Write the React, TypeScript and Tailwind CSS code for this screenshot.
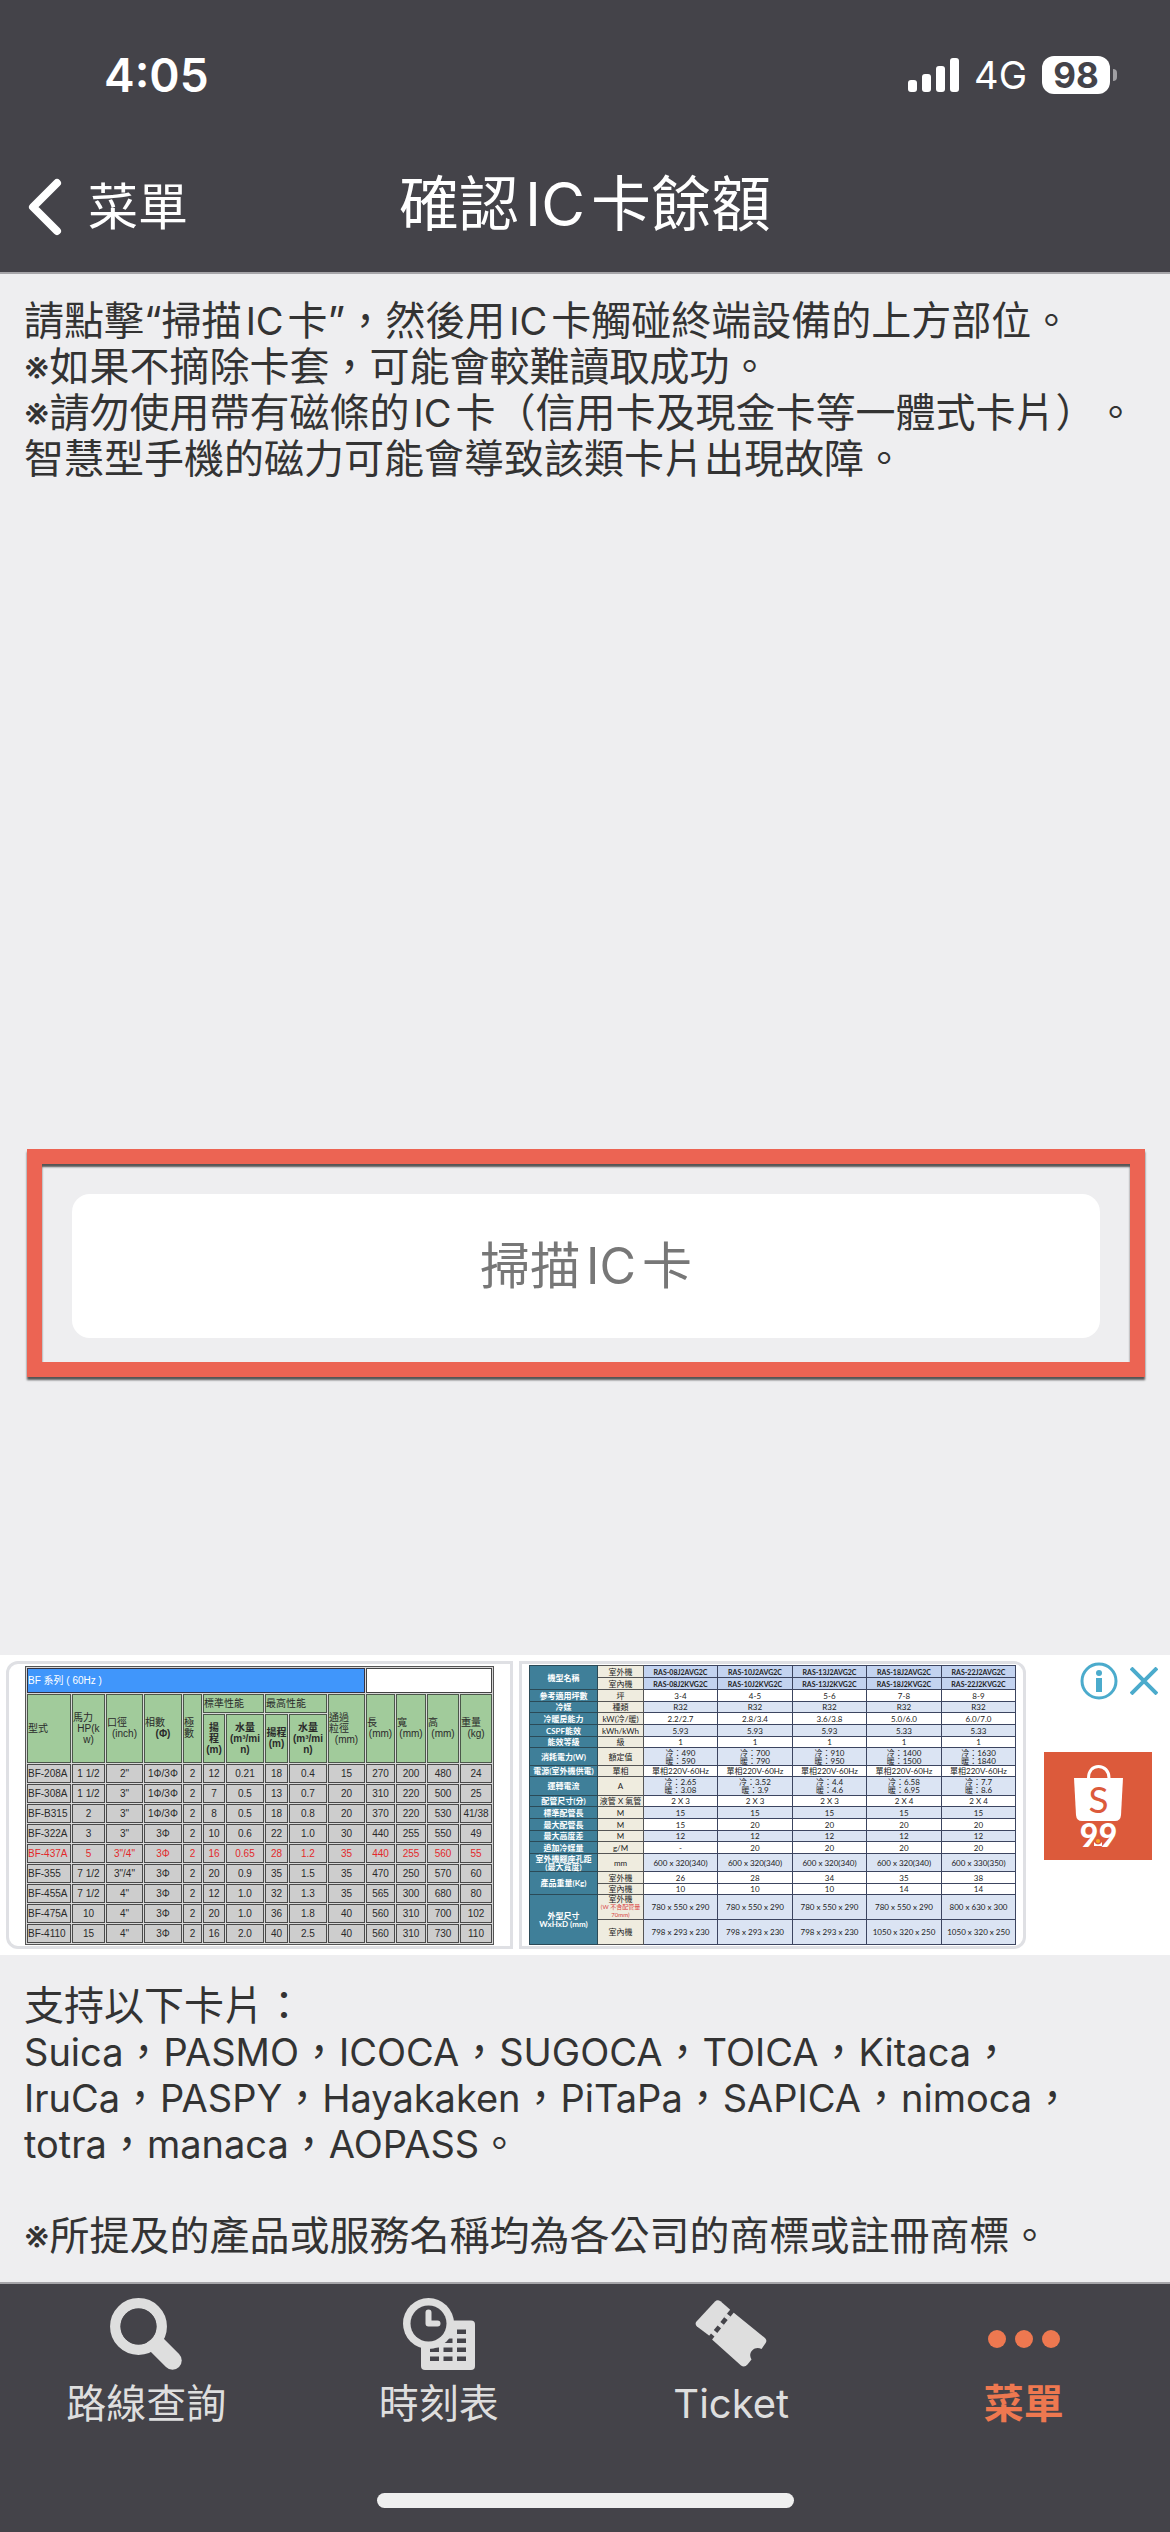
import { Fragment, type ReactNode } from 'react'
import clsx from 'clsx'

const PUMP_COLS = [45, 34, 38, 39, 20, 23, 39, 24, 39, 38, 30, 31, 33, 33]

const PUMP_ROWS = [
  ['BF-208A', '1 1/2', '2"', '1Φ/3Φ', '2', '12', '0.21', '18', '0.4', '15', '270', '200', '480', '24'],
  ['BF-308A', '1 1/2', '3"', '1Φ/3Φ', '2', '7', '0.5', '13', '0.7', '20', '310', '220', '500', '25'],
  ['BF-B315', '2', '3"', '1Φ/3Φ', '2', '8', '0.5', '18', '0.8', '20', '370', '220', '530', '41/38'],
  ['BF-322A', '3', '3"', '3Φ', '2', '10', '0.6', '22', '1.0', '30', '440', '255', '550', '49'],
  ['BF-437A', '5', '3"/4"', '3Φ', '2', '16', '0.65', '28', '1.2', '35', '440', '255', '560', '55'],
  ['BF-355', '7 1/2', '3"/4"', '3Φ', '2', '20', '0.9', '35', '1.5', '35', '470', '250', '570', '60'],
  ['BF-455A', '7 1/2', '4"', '3Φ', '2', '12', '1.0', '32', '1.3', '35', '565', '300', '680', '80'],
  ['BF-475A', '10', '4"', '3Φ', '2', '20', '1.0', '36', '1.8', '40', '560', '310', '700', '102'],
  ['BF-4110', '15', '4"', '3Φ', '2', '16', '2.0', '40', '2.5', '40', '560', '310', '730', '110'],
]

const AC_COLS = [68, 46, 74, 75, 74, 75, 74]

type AcRow = { h: number; head?: string; span?: number; unit: string; note?: string; cells: string[]; tone?: 'model' | 'blue' }

const AC_ROWS: AcRow[] = [
  { h: 12, head: '機型名稱', span: 2, unit: '室外機', tone: 'model', cells: ['RAS-08J2AVG2C', 'RAS-10J2AVG2C', 'RAS-13J2AVG2C', 'RAS-18J2AVG2C', 'RAS-22J2AVG2C'] },
  { h: 12, unit: '室內機', tone: 'model', cells: ['RAS-08J2KVG2C', 'RAS-10J2KVG2C', 'RAS-13J2KVG2C', 'RAS-18J2KVG2C', 'RAS-22J2KVG2C'] },
  { h: 12, head: '參考適用坪數', unit: '坪', cells: ['3-4', '4-5', '5-6', '7-8', '8-9'] },
  { h: 11, head: '冷媒', unit: '種類', tone: 'blue', cells: ['R32', 'R32', 'R32', 'R32', 'R32'] },
  { h: 12, head: '冷暖房能力', unit: 'kW(冷/暖)', cells: ['2.2/2.7', '2.8/3.4', '3.6/3.8', '5.0/6.0', '6.0/7.0'] },
  { h: 12, head: 'CSPF能效', unit: 'kWh/kWh', tone: 'blue', cells: ['5.93', '5.93', '5.93', '5.33', '5.33'] },
  { h: 11, head: '能效等級', unit: '級', cells: ['1', '1', '1', '1', '1'] },
  { h: 18, head: '消耗電力(W)', unit: '額定值', tone: 'blue', cells: ['冷：490\n暖：590', '冷：700\n暖：790', '冷：910\n暖：950', '冷：1400\n暖：1500', '冷：1630\n暖：1840'] },
  { h: 11, head: '電源(室外機供電)', unit: '單相', cells: ['單相220V-60Hz', '單相220V-60Hz', '單相220V-60Hz', '單相220V-60Hz', '單相220V-60Hz'] },
  { h: 19, head: '運轉電流', unit: 'A', tone: 'blue', cells: ['冷：2.65\n暖：3.08', '冷：3.52\n暖：3.9', '冷：4.4\n暖：4.6', '冷：6.58\n暖：6.95', '冷：7.7\n暖：8.6'] },
  { h: 11, head: '配管尺寸(分)', unit: '液管 X 氣管', cells: ['2 X 3', '2 X 3', '2 X 3', '2 X 4', '2 X 4'] },
  { h: 12, head: '標準配管長', unit: 'M', tone: 'blue', cells: ['15', '15', '15', '15', '15'] },
  { h: 12, head: '最大配管長', unit: 'M', cells: ['15', '20', '20', '20', '20'] },
  { h: 11, head: '最大高度差', unit: 'M', tone: 'blue', cells: ['12', '12', '12', '12', '12'] },
  { h: 12, head: '追加冷媒量', unit: 'g/M', cells: ['-', '20', '20', '20', '20'] },
  { h: 18, head: '室外機腳座孔距\n(最大寬度)', unit: 'mm', tone: 'blue', cells: ['600 x 320(340)', '600 x 320(340)', '600 x 320(340)', '600 x 320(340)', '600 x 330(350)'] },
  { h: 12, head: '產品重量(Kg)', span: 2, unit: '室外機', cells: ['26', '28', '34', '35', '38'] },
  { h: 11, unit: '室內機', cells: ['10', '10', '10', '14', '14'] },
  { h: 25, head: '外型尺寸\nWxHxD (mm)', span: 2, unit: '室外機', note: '(W 不含配管量\n70mm)', tone: 'blue', cells: ['780 x 550 x 290', '780 x 550 x 290', '780 x 550 x 290', '780 x 550 x 290', '800 x 630 x 300'] },
  { h: 25, unit: '室內機', tone: 'blue', cells: ['798 x 293 x 230', '798 x 293 x 230', '798 x 293 x 230', '1050 x 320 x 250', '1050 x 320 x 250'] },
]

const CARD_LINES = [
  ['Suica', 'PASMO', 'ICOCA', 'SUGOCA', 'TOICA', 'Kitaca'],
  ['IruCa', 'PASPY', 'Hayakaken', 'PiTaPa', 'SAPICA', 'nimoca'],
]

function Latin({ children }: { children: ReactNode }) {
  return <span className="text-[38px] leading-none">{children}</span>
}

function StatusBar() {
  return (
    <div className="flex h-[150px] items-center justify-between pl-[104px] pr-[53px] font-[Inter,sans-serif]">
      <span className="text-[46px] leading-none font-semibold">4:05</span>
      <div className="flex items-center gap-[15px]">
        <svg width="51" height="34" viewBox="0 0 51 34" fill="currentColor">
          <rect x="0" y="22" width="9" height="12" rx="3" />
          <rect x="14" y="16" width="9" height="18" rx="3" />
          <rect x="28" y="8" width="9" height="26" rx="3" />
          <rect x="42" y="0" width="9" height="34" rx="3" />
        </svg>
        <span className="text-[38px] leading-none">4G</span>
        <div className="flex items-center gap-[3px]">
          <span className="flex h-[38px] w-[68px] items-center justify-center rounded-xl bg-white text-[35px] leading-none font-bold text-[#444349]">
            98
          </span>
          <span className="h-3 w-1 rounded-r-full bg-[#a09fa3]" />
        </div>
      </div>
    </div>
  )
}

function PumpTable() {
  const th = 'border border-[#4b574a] bg-[#a1cb9b] p-0 font-normal'
  return (
    <table className="w-[466px] table-fixed border-separate border-spacing-px border border-[#555] bg-[#d8d8d8] font-['Liberation_Sans','Noto_Sans_CJK_TC',sans-serif] text-[10px] leading-[11px] whitespace-nowrap text-[#2a2a2a]">
      <colgroup>
        {PUMP_COLS.map((w, i) => <col key={i} style={{ width: w - 1 }} />)}
      </colgroup>
      <thead className="text-left">
        <tr className="h-[25px]">
          <th colSpan={10} className="border border-[#334] bg-[#4096fb] p-0 font-normal text-white">BF 系列 ( 60Hz )</th>
          <td colSpan={4} className="border border-[#444] bg-white p-0" />
        </tr>
        <tr className="h-[19px]">
          <th rowSpan={2} className={th}>型式</th>
          <th rowSpan={2} className={th}>馬力<span className="block text-center">HP(k<br />w)</span></th>
          <th rowSpan={2} className={th}>口徑<span className="block text-center">(inch)</span></th>
          <th rowSpan={2} className={th}>相數<b className="block text-center">(Φ)</b></th>
          <th rowSpan={2} className={th}>極<br />數</th>
          <th colSpan={2} className={th}>標準性能</th>
          <th colSpan={2} className={th}>最高性能</th>
          <th rowSpan={2} className={th}>通過<br />粒徑<span className="block text-center">(mm)</span></th>
          <th rowSpan={2} className={th}>長<span className="block text-center">(mm)</span></th>
          <th rowSpan={2} className={th}>寬<span className="block text-center">(mm)</span></th>
          <th rowSpan={2} className={th}>高<span className="block text-center">(mm)</span></th>
          <th rowSpan={2} className={th}>重量<span className="block text-center">(kg)</span></th>
        </tr>
        <tr className="h-[49px] text-center">
          {[0, 1].map((i) => (
            <Fragment key={i}>
              <th className={th}><b>{i === 0 ? <>揚<br />程</> : '揚程'}<br />(m)</b></th>
              <th className={th}><b>水量<br />(m³/mi<br />n)</b></th>
            </Fragment>
          ))}
        </tr>
      </thead>
      <tbody className="text-center">
        {PUMP_ROWS.map((row) => (
          <tr key={row[0]} className={clsx('h-[19px]', row[0] === 'BF-437A' && 'text-[#e2292b]')}>
            {row.map((cell, i) => (
              <td key={i} className="border border-[#4a4a4a] bg-[#cdcdcd] p-0 first:text-left">{cell}</td>
            ))}
          </tr>
        ))}
      </tbody>
    </table>
  )
}

function AcTable() {
  return (
    <table className="w-[486px] table-fixed border-collapse text-center font-[Lato,'Noto_Sans_CJK_TC',sans-serif] text-[8px] leading-[8px] whitespace-pre text-[#222]">
      <colgroup>
        {AC_COLS.map((w, i) => <col key={i} style={{ width: w }} />)}
      </colgroup>
      <tbody>
        {AC_ROWS.map((row, r) => (
          <tr key={r} style={{ height: row.h }}>
            {row.head && (
              <th rowSpan={row.span ?? 1} className="border border-[#2b4a57] bg-[#3f7f99] p-0 font-bold text-white">{row.head}</th>
            )}
            <td className="border border-[#555] bg-[#efecdf] p-0">
              {row.unit}
              {row.note && <span className="block text-[6px] leading-[8px] text-[#d8423f]">{row.note}</span>}
            </td>
            {row.cells.map((cell, i) => (
              <td
                key={i}
                className={clsx(
                  'border border-[#3c4560] p-0',
                  row.tone === 'model' && 'bg-[#c3d3f0] text-[7px] font-bold',
                  row.tone === 'blue' && 'bg-[#dbe4f3]',
                )}
              >
                {cell}
              </td>
            ))}
          </tr>
        ))}
      </tbody>
    </table>
  )
}

function AdBanner() {
  return (
    <aside className="flex h-[300px] justify-between bg-white pl-[6px] pr-[12px]">
      <div className="flex items-center gap-[6px]">
        <a href="#pump" className="flex h-[288px] w-[507px] items-center justify-center rounded-l-xl border-[3px] border-[#dfe0e4] bg-white">
          <PumpTable />
        </a>
        <a href="#aircon" className="flex h-[288px] w-[507px] items-center justify-center rounded-r-xl border-[3px] border-[#dfe0e4] bg-white">
          <AcTable />
        </a>
      </div>
      <div className="flex flex-col items-end gap-[52px] pt-[7px]">
        <div className="flex items-center gap-[12px]">
          <button aria-label="廣告資訊">
            <svg width="38" height="38" viewBox="0 0 38 38" fill="#4babcc">
              <circle cx="19" cy="19" r="17" fill="none" stroke="#4babcc" strokeWidth="3" />
              <circle cx="19" cy="11" r="3" />
              <rect x="16" y="16" width="6" height="14" />
            </svg>
          </button>
          <button aria-label="關閉廣告">
            <svg width="28" height="28" viewBox="0 0 28 28" stroke="#4babcc" strokeWidth="4">
              <path d="M1 1 27 27M27 1 1 27" />
            </svg>
          </button>
        </div>
        <a href="#shop" aria-label="Shopee" className="mr-[6px]">
          <svg width="108" height="108" viewBox="0 0 108 108">
            <rect width="108" height="108" fill="#dc5a3b" />
            <path d="M44.500 27v-1c0-7 4-11.500 10-11.500S65 19 65 26v1" fill="none" stroke="#fff" strokeWidth="3" />
            <path d="M30 26h49l-2 37q-.5 6-6 6H38q-5.500 0-6-6z" fill="#fff" />
            <text x="54.500" y="61" textAnchor="middle" fill="#dc5a3b" fontFamily="Lato, sans-serif" fontSize="37">S</text>
            <text x="45" y="95" textAnchor="middle" fill="#fff" fontFamily="Lato, sans-serif" fontWeight="900" fontSize="32">9</text>
            <text x="64" y="95" textAnchor="middle" fill="#fff" fontFamily="Lato, sans-serif" fontWeight="900" fontSize="32">9</text>
            <path d="M50 90q4 5 8 0v4h-8z" fill="#fff" />
            <circle cx="54" cy="89" r="2" fill="#f5a623" />
          </svg>
        </a>
      </div>
    </aside>
  )
}

const SearchIcon = (
  <svg width="72" height="72" viewBox="0 0 72 72" fill="none" stroke="currentColor">
    <circle cx="28.500" cy="28.500" r="23.200" strokeWidth="10.500" />
    <path d="M46 46 62.500 62.500" strokeWidth="18.500" strokeLinecap="round" />
    <circle cx="28.500" cy="28.500" r="18" fill="#444349" stroke="none" />
  </svg>
)

const TimetableIcon = (
  <svg width="72" height="72" viewBox="0 0 72 72" fill="currentColor">
    <rect x="18" y="22.500" width="54" height="49.500" rx="4" />
    <g fill="#444349">
      <path d="M54 31.500h9V36h-9zM54 40.500h9V45h-9zM54 49.500h9V54h-9zM54 58.500h9V63h-9zM40.500 40.500h9V45h-9zM40.500 49.500h9V54h-9zM40.500 58.500h9V63h-9zM27 49.500h9V54h-9zM27 58.500h9V63h-9z" />
    </g>
    <circle cx="25.500" cy="25.500" r="25.500" />
    <circle cx="25.500" cy="25.500" r="18" fill="#444349" />
    <path d="M25.500 14.500V25.500H34.500" fill="none" stroke="currentColor" strokeWidth="6" strokeLinecap="round" strokeLinejoin="round" />
  </svg>
)

const TicketIcon = (
  <svg width="72" height="72" viewBox="0 0 72 72" fill="currentColor">
    <path d="M20 3.500Q22.500 1 25.500 3.300L35 11.500 15 38.200 2 28.500Q-.5 26 1.500 23.500z" />
    <path d="M38.500 14.500 70 40Q72.500 42.500 70.500 45.200L66.500 51C60 47 52 54.500 56.500 61.500L52.500 66.500Q49.500 70 46 67.500L17 41.500z" />
    <path d="M36.700 13 16 39.800" stroke="currentColor" strokeWidth="5" />
    <path d="M37.500 12.500 14.500 41" stroke="#444349" strokeWidth="4.500" strokeDasharray="6 4.500" strokeLinecap="butt" />
  </svg>
)

const MoreIcon = (
  <svg width="74" height="72" viewBox="0 0 74 72" fill="currentColor">
    <circle cx="10" cy="41" r="9" />
    <circle cx="37" cy="41" r="9" />
    <circle cx="64" cy="41" r="9" />
  </svg>
)

const TABS = [
  { id: 'route', label: '路線查詢', icon: SearchIcon },
  { id: 'timetable', label: '時刻表', icon: TimetableIcon },
  { id: 'ticket', label: 'Ticket', icon: TicketIcon },
  { id: 'menu', label: '菜單', icon: MoreIcon, active: true },
]

export default function App() {
  return (
    <div className="flex min-h-screen flex-col bg-[#eeeef0] font-[Inter,'Noto_Sans_CJK_TC',sans-serif] text-[40px] leading-[46px] text-[#333] [text-spacing-trim:space-all]">
      <header className="border-b-2 border-[#a6a5a9] bg-[#444349] text-white">
        <StatusBar />
        <div className="grid h-[122px] grid-cols-[1fr_auto_1fr] items-start pt-[20px]">
          <button className="flex h-[74px] items-center gap-[26px] justify-self-start pl-[28px] text-[50px]">
            <svg width="34" height="58" viewBox="0 0 34 58" fill="none" stroke="currentColor" strokeWidth="8" strokeLinecap="round" strokeLinejoin="round">
              <path d="M29 5 5 29 29 53" />
            </svg>
            菜單
          </button>
          <h1 className="text-[60px] leading-[68px]">確認<span className="mx-1.5">IC</span>卡餘額</h1>
        </div>
      </header>

      <main className="flex flex-1 flex-col">
        <p className="px-6 pt-6 whitespace-nowrap">
          請點擊“掃描<span className="mx-1"><Latin>IC</Latin></span>卡”，然後用<span className="mx-1"><Latin>IC</Latin></span>卡觸碰終端設備的上方部位。<br />
          ※如果不摘除卡套，可能會較難讀取成功。<br />
          ※請勿使用帶有磁條的<span className="mx-1"><Latin>IC</Latin></span>卡（信用卡及現金卡等一體式卡片）。<br />
          智慧型手機的磁力可能會導致該類卡片出現故障。
        </p>

        <div className="flex flex-1 items-end pr-[25px] pb-[278px] pl-[27px]">
          <div className="w-full border-[15px] border-[#ec6453] px-[30px] pt-[30px] pb-6 shadow-[0_3px_2px_#555,inset_0_3px_2px_#555]">
            <button className="h-[144px] w-full rounded-[18px] bg-white text-[50px] text-[#777]">
              掃描<span className="mx-1.5">IC</span>卡
            </button>
          </div>
        </div>

        <AdBanner />

        <div className="px-6 pt-7 pb-[23px] whitespace-nowrap">
          <p>支持以下卡片：</p>
          {CARD_LINES.map((line) => (
            <p key={line[0]}>
              {line.map((name) => <Fragment key={name}><Latin>{name}</Latin>，</Fragment>)}
            </p>
          ))}
          <p><Latin>totra</Latin>，<Latin>manaca</Latin>，<Latin>AOPASS</Latin>。</p>
          <p className="mt-[46px]">※所提及的產品或服務名稱均為各公司的商標或註冊商標。</p>
        </div>
      </main>

      <footer className="border-t-2 border-[#a6a5a9] bg-[#444349] pb-6 text-[#dedede]">
        <nav className="grid grid-cols-4 pt-[14px]">
          {TABS.map((tab) => (
            <a
              key={tab.id}
              href={`#${tab.id}`}
              className={clsx('flex flex-col items-center gap-[11px]', tab.active && 'font-bold text-[#ee7850]')}
            >
              {tab.icon}
              {tab.label}
            </a>
          ))}
        </nav>
        <div className="mx-auto mt-[66px] h-[15px] w-[417px] rounded-full bg-[#efefef]" />
      </footer>
    </div>
  )
}
